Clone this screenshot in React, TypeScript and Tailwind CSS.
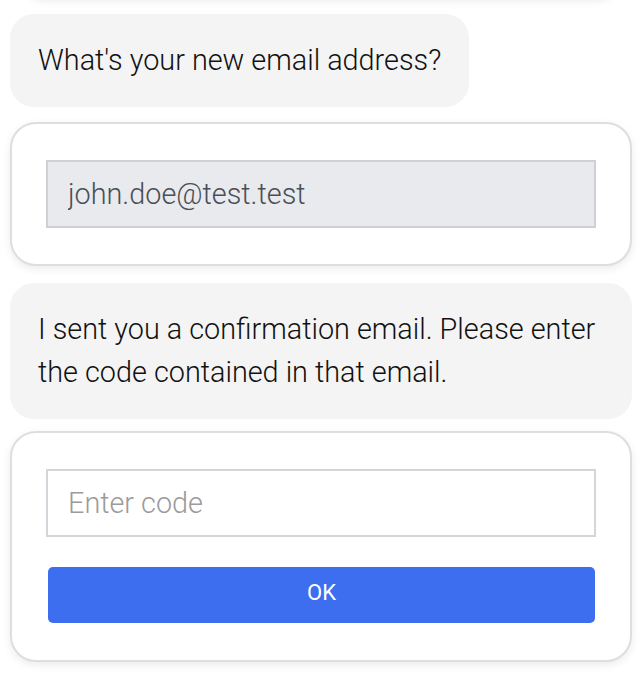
import React from 'react';

const font = { fontFamily: 'Roboto, "Liberation Sans", sans-serif' };

function Bubble({ children }: { children: React.ReactNode }) {
  return (
    <div className="w-fit max-w-full rounded-[24px] bg-[#f4f4f4] px-[28px] py-[25px] text-[28.8px] leading-[43px] font-light text-[#111]">
      {children}
    </div>
  );
}

function Card({ children, className = '' }: { children: React.ReactNode; className?: string }) {
  return (
    <div
      className={`rounded-[26px] border-2 border-[#dedede] bg-white px-[34px] shadow-[0_3px_8px_rgba(0,0,0,0.08)] ${className}`}
    >
      {children}
    </div>
  );
}

export default function App() {
  return (
    <div className="min-h-screen bg-white" style={font}>
      <div className="flex flex-col gap-[15px] pl-[10px] pr-[12px] pb-6">
        {/* previous card, scrolled mostly out of view */}
        <div className="-mt-[101px] mx-[10px] h-[100px] rounded-[26px] bg-white shadow-[0_2px_8px_rgba(0,0,0,0.08)]" />

        <Bubble>What's your new email address?</Bubble>

        <Card className="py-[36px]">
          <input
            readOnly
            value="john.doe@test.test"
            className="block h-[68px] w-full border-2 border-[#cdd0d5] bg-[#e9eaee] px-[20px] text-[28.8px] font-light text-[#4a4f57] outline-none"
          />
        </Card>

        <div className="mt-[2px]">
          <Bubble>
            I sent you a confirmation email. Please enter the code contained in that email.
          </Bubble>
        </div>

        <Card className="-mt-[3px] pt-[36px] pb-[37px]">
          <input
            placeholder="Enter code"
            className="block h-[68px] w-full border-2 border-[#d2d5da] bg-white px-[20px] text-[28.8px] font-light text-[#333] outline-none placeholder:text-[#9b9b9b]"
          />
          <button
            type="button"
            className="mt-[30px] ml-[2px] block h-[56px] w-[calc(100%-3px)] rounded-[5px] bg-[#3d6ef0] pb-[6px] text-[22px] font-normal text-white"
          >
            OK
          </button>
        </Card>
      </div>
    </div>
  );
}
